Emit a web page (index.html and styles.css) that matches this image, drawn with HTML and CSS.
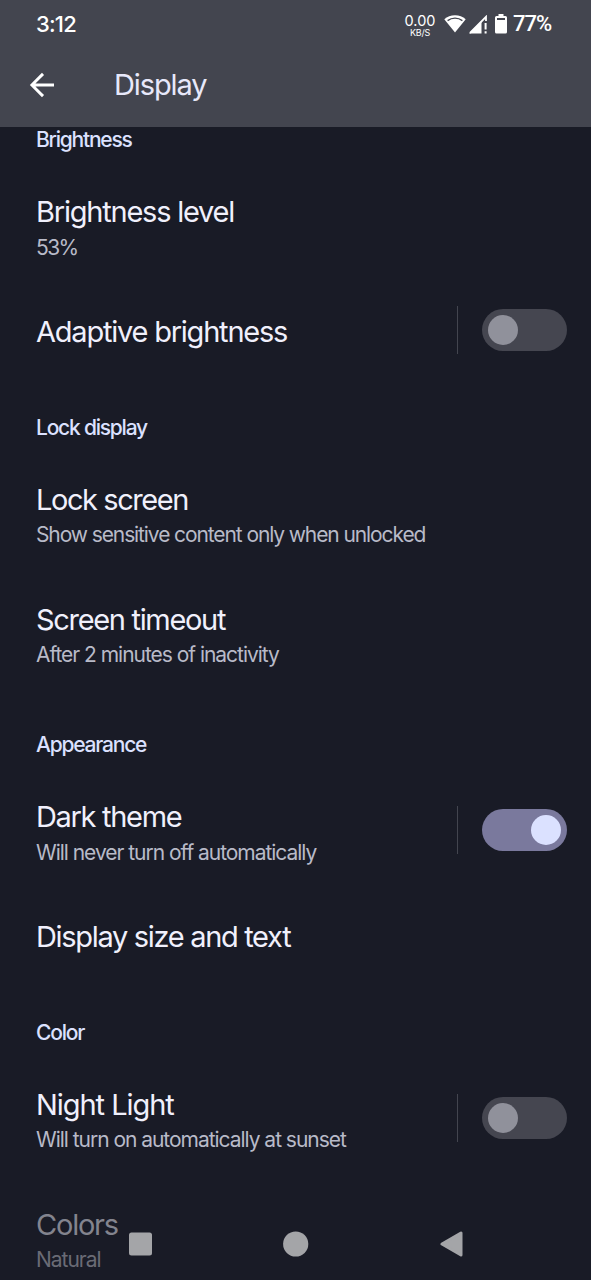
FILE: index.html
```html
<!DOCTYPE html>
<html lang="en">
<head>
<meta charset="utf-8">
<title>Display</title>
<link rel="stylesheet" href="styles.css">
</head>
<body>
<div class="screen">
  <header class="top">
    <div class="status">
      <span class="clock">3:12</span>
      <div class="tray">
        <div class="speed"><span class="rate">0.00</span><span class="unit">KB/S</span></div>
        <svg class="wifi" width="22" height="18" viewBox="0 0 22 18"><path d="M11 .2C6.900.2 3.100 1.600.3 4.200L11 17.600 21.700 4.200C18.900 1.600 15.100.2 11 .2Z" fill="#fff"/><path d="M3.600 5.600C8 2.400 14 2.400 18.400 5.600" fill="none" stroke="#43454f" stroke-width="1.300"/></svg>
        <svg class="signal" width="19" height="19" viewBox="0 0 19 19"><path d="M1 18 17 1.800V6" fill="none" stroke="#fff" stroke-width="1.800"/><path d="M0 18.500 12.500 6V18.500Z" fill="#fff"/><path d="M16.600 8V14.600M16.600 16.300V18.500" stroke="#fff" stroke-width="2"/></svg>
        <svg class="battery" width="12" height="20" viewBox="0 0 12 20"><path d="M3.500 0H8.500V2H10.500Q12 2 12 3.500V18Q12 19.500 10.500 19.500H1.500Q0 19.500 0 18V3.500Q0 2 1.500 2H3.500Z" fill="#fff"/><path d="M2 4H10V6H2Z" fill="#43454f"/></svg>
        <span class="percent">77%</span>
      </div>
    </div>
    <div class="bar">
      <svg class="back" width="26" height="26" viewBox="0 0 26 26"><path d="M25 13H3.200M14 1.900 2.900 13 14 24.100" fill="none" stroke="#fff" stroke-width="2.900"/></svg>
      <h1 class="heading">Display</h1>
    </div>
  </header>
  <main class="list">
    <h2 class="section">Brightness</h2>
    <div class="row"><div class="label"><span class="title">Brightness level</span><span class="sub short">53%</span></div></div>
    <div class="row single"><div class="label"><span class="title">Adaptive brightness</span></div><div class="control"><span class="switch"></span></div></div>
    <h2 class="section">Lock display</h2>
    <div class="row"><div class="label"><span class="title snug">Lock screen</span><span class="sub long">Show sensitive content only when unlocked</span></div></div>
    <div class="row"><div class="label"><span class="title tight">Screen timeout</span><span class="sub">After 2 minutes of inactivity</span></div></div>
    <h2 class="section">Appearance</h2>
    <div class="row"><div class="label"><span class="title tight">Dark theme</span><span class="sub">Will never turn off automatically</span></div><div class="control"><span class="switch on"></span></div></div>
    <div class="row single"><div class="label"><span class="title tight">Display size and text</span></div></div>
    <h2 class="section">Color</h2>
    <div class="row"><div class="label"><span class="title loose">Night Light</span><span class="sub">Will turn on automatically at sunset</span></div><div class="control"><span class="switch"></span></div></div>
    <div class="row faded"><div class="label"><span class="title">Colors</span><span class="sub">Natural</span></div></div>
  </main>
  <nav class="nav">
    <svg width="26" height="26" viewBox="0 0 26 26"><rect x="2" y="1.500" width="23" height="23" rx="2.500" fill="#a4a5a8"/></svg>
    <svg width="26" height="26" viewBox="0 0 26 26"><circle cx="12.700" cy="13" r="12.600" fill="#a4a5a8"/></svg>
    <svg width="26" height="26" viewBox="0 0 26 26"><path d="M4 13 23 2V24Z" fill="#a4a5a8" stroke="#a4a5a8" stroke-width="3" stroke-linejoin="round"/></svg>
  </nav>
</div>
</body>
</html>
```
FILE: styles.css
```css
* { box-sizing: border-box; }
body { margin: 0; background: #191b26; font-family: Inter, "Liberation Sans", sans-serif; }
.screen { position: relative; height: 1280px; overflow: hidden; display: flex; flex-direction: column; background: #191b26; }
.top { height: 127px; flex: none; background: #43454f; z-index: 1; }
.status { height: 48px; padding: 0 39px 0 36px; display: flex; align-items: center; justify-content: space-between; color: #fff; }
.clock, .percent { font-size: 22px; font-weight: 500; line-height: 28px; letter-spacing: -0.8px; }
.percent { width: 39px; font-family: Roboto, sans-serif; letter-spacing: -1px; white-space: nowrap; }
.tray { display: flex; align-items: center; }
.speed { display: flex; flex-direction: column; align-items: center; width: 32px; margin-right: 8px; padding-top: 3px; }
.rate { font-size: 14.500px; line-height: 14px; letter-spacing: 0; }
.unit { font-size: 9px; line-height: 9px; letter-spacing: -0.3px; }
.wifi { margin-right: 3px; }
.signal { margin-right: 7px; }
.battery { margin-right: 6px; }
.bar { height: 73px; padding-left: 29px; display: flex; align-items: center; }
.heading { margin: 0 0 0 59px; font-size: 29px; font-weight: 400; line-height: 36px; letter-spacing: -1.1px; color: #e7e8fa; }
.list { margin-top: -39.200px; flex: none; }
.section { margin: 0; height: 77.500px; padding: 38.300px 36px 0; font-size: 21px; line-height: 28px; font-weight: 500; letter-spacing: -1.220px; color: #dbe1ff; }
.row { height: 120px; padding: 0 24px 0 36px; display: flex; align-items: center; justify-content: space-between; }
.label { display: flex; flex-direction: column; white-space: nowrap; align-items: flex-start; padding-top: 4.600px; }
.single { height: 90px; }
.single .label { padding-top: 3px; }
.title { font-size: 29px; line-height: 38px; letter-spacing: -1.220px; color: #f0f0fc; }
.tight { letter-spacing: -1.320px; }
.snug { letter-spacing: -1.430px; }
.loose { letter-spacing: -1.050px; }
.sub { font-size: 21px; line-height: 28px; padding-top: 2.700px; letter-spacing: -1.030px; color: #b8bac8; }
.long { letter-spacing: -1.100px; }
.short { letter-spacing: -1.600px; }
.control { height: 48px; padding-left: 24px; border-left: 1px solid #43454f; display: flex; align-items: center; }
.switch { width: 85px; height: 42px; border-radius: 21px; padding: 6px; background: #454650; display: flex; align-items: center; }
.switch::before { content: ""; width: 30px; height: 30px; border-radius: 50%; background: #90919b; }
.on { background: #7a799d; justify-content: flex-end; }
.on::before { background: #dbe1ff; }
.faded .title { color: #83848e; }
.faded .sub { color: #6a6b75; }
.nav { position: absolute; left: 0; right: 0; bottom: 23px; padding: 0 127px; display: flex; justify-content: space-between; }
```
